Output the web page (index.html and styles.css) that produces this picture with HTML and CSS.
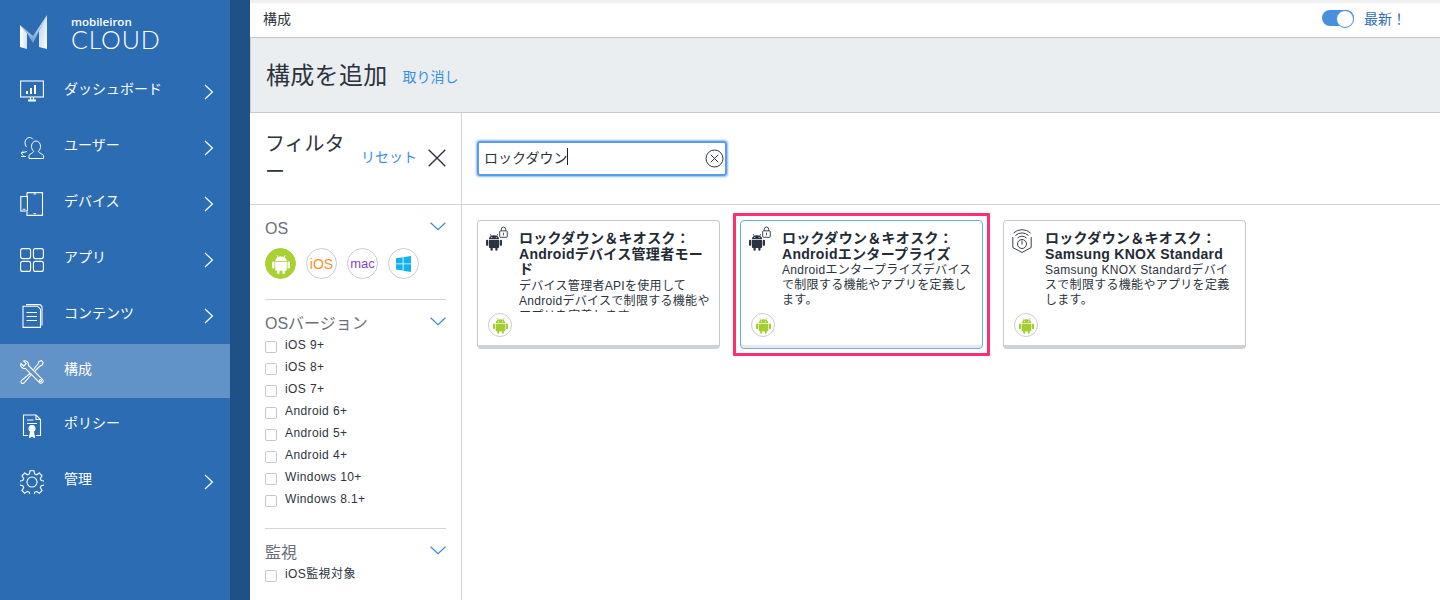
FILE: index.html
```html
<!DOCTYPE html>
<html lang="ja">
<head>
    <meta charset="UTF-8">
    <title>構成を追加</title>
    <link rel="stylesheet" href="styles.css">
</head>
<body>

    <svg class="icon-defs" width="0" height="0">
        <defs>
            <symbol id="android" viewBox="0 0 20 22">
                <path d="M5.2 1 6.6 3.4M14.8 1 13.4 3.4" stroke="currentColor" stroke-width=".9" fill="none"/>
                <path d="M3.6 7.6C3.7 4.6 6.5 2.6 10 2.6s6.3 2 6.4 5z" fill="currentColor"/>
                <path d="M3.6 8.5h12.8v8.7a1.3 1.3 0 0 1-1.3 1.3H4.9a1.3 1.3 0 0 1-1.3-1.3z" fill="currentColor"/>
                <rect x="0" y="8.3" width="2.8" height="7.6" rx="1.4" fill="currentColor"/>
                <rect x="17.2" y="8.3" width="2.8" height="7.6" rx="1.4" fill="currentColor"/>
                <rect x="5.6" y="17" width="2.8" height="5" rx="1.4" fill="currentColor"/>
                <rect x="11.6" y="17" width="2.8" height="5" rx="1.4" fill="currentColor"/>
                <circle cx="7.2" cy="5.3" r=".7" fill="#fff"/>
                <circle cx="12.8" cy="5.3" r=".7" fill="#fff"/>
            </symbol>
            <symbol id="chevron-right" viewBox="0 0 10 16">
                <path d="M1 1l7.4 7L1 15" fill="none" stroke="currentColor" stroke-width="1.2"/>
            </symbol>
            <symbol id="chevron-down" viewBox="0 0 16 9">
                <path d="M.6.8 8 7.6 15.4.8" fill="none" stroke="currentColor" stroke-width="1.2"/>
            </symbol>
            <symbol id="lock" viewBox="0 0 10 13">
                <path d="M2.6 5.4V3.4a2.4 2.4 0 0 1 4.8 0v2" fill="none" stroke="currentColor" stroke-width="1.1"/>
                <rect x=".8" y="5.2" width="8.4" height="7.2" rx=".8" fill="#fff" stroke="currentColor" stroke-width="1.1"/>
                <rect x="4.5" y="7.2" width="1" height="3" fill="currentColor"/>
            </symbol>
        </defs>
    </svg>

    <aside class="sidebar">
        <div class="logo">
            <svg class="logo-mark" width="27" height="34" viewBox="0 0 27 34">
                <defs>
                    <linearGradient id="mark-left" x1="0" y1="0" x2="1" y2="0">
                        <stop offset="0" stop-color="#ffffff"/>
                        <stop offset="1" stop-color="#d4e3f2"/>
                    </linearGradient>
                    <linearGradient id="mark-mid" x1="0" y1="0" x2="0" y2="1">
                        <stop offset="0" stop-color="#f4f8fc"/>
                        <stop offset="1" stop-color="#6f9ccd"/>
                    </linearGradient>
                    <linearGradient id="mark-right" x1="0" y1="0" x2="1" y2="1">
                        <stop offset="0" stop-color="#b7cfe8"/>
                        <stop offset="1" stop-color="#ffffff"/>
                    </linearGradient>
                </defs>
                <path d="M0 10 7 18V34L0 32z" fill="url(#mark-left)"/>
                <path d="M0 10 13 21 27 0 19 16 13 28 7 18z" fill="url(#mark-mid)"/>
                <path d="M27 0V34L19 32V16z" fill="url(#mark-right)"/>
            </svg>
            <div class="logo-text">
                <div class="logo-brand">mobileiron</div>
                <div class="logo-product">CLOUD</div>
            </div>
        </div>

        <nav class="nav">
            <a class="nav-item">
                <svg class="nav-icon" viewBox="0 0 24 24" fill="none" stroke="#fff" stroke-width="1.1">
                    <rect x=".6" y="1" width="22.8" height="16"/>
                    <path d="M7 14V11M11 14V8M15 14V5" stroke-width="2"/>
                    <path d="M8 20.5h8" stroke-width="2"/>
                    <path d="M10.5 17v3M13.5 17v3"/>
                </svg>
                <span class="nav-label">ダッシュボード</span>
                <svg class="nav-arrow"><use href="#chevron-right"/></svg>
            </a>
            <a class="nav-item">
                <svg class="nav-icon" viewBox="0 0 24 24" fill="none" stroke="#fff" stroke-width="1">
                    <path d="M9 22.500h14.500v-2.800c0-1.700-4.600-2.300-5.200-4.400 1.500-1.300 2.200-3 2.200-5 0-3-2-5.300-4.500-5.300s-4.500 2.300-4.500 5.300c0 2 .7 3.700 2.200 5-.6 2.100-4.700 2.700-4.700 4.400z"/>
                    <path d="M13 3.300C12.100 2 10.800 1.500 9.500 1.500 7 1.500 5 3.800 5 6.800c0 1.600.5 3 1.400 4.200"/>
                    <path d="M6.800 15.500c-1.500.6-4 1-5.800 1.800l2.500-2.300M1 17.300l2.500 2.200M1 20.500h5"/>
                </svg>
                <span class="nav-label">ユーザー</span>
                <svg class="nav-arrow"><use href="#chevron-right"/></svg>
            </a>
            <a class="nav-item">
                <svg class="nav-icon" viewBox="0 0 24 24" fill="none" stroke="#fff" stroke-width="1.1">
                    <path d="M7 .6h15.500v22.800H7V20M7 5V.6"/>
                    <rect x=".8" y="4.500" width="6.600" height="14.500"/>
                    <path d="M13.500 2h2.500M13.500 21.700h2.500M2.800 17.300h2.500"/>
                </svg>
                <span class="nav-label">デバイス</span>
                <svg class="nav-arrow"><use href="#chevron-right"/></svg>
            </a>
            <a class="nav-item">
                <svg class="nav-icon" viewBox="0 0 24 24" fill="none" stroke="#fff" stroke-width="1.100">
                    <rect x=".6" y=".6" width="10" height="10" rx="2"/>
                    <rect x="13.400" y=".6" width="10" height="10" rx="2"/>
                    <rect x=".6" y="13.400" width="10" height="10" rx="2"/>
                    <rect x="13.400" y="13.400" width="10" height="10" rx="2"/>
                </svg>
                <span class="nav-label">アプリ</span>
                <svg class="nav-arrow"><use href="#chevron-right"/></svg>
            </a>
            <a class="nav-item">
                <svg class="nav-icon" viewBox="0 0 24 24" fill="none" stroke="#fff" stroke-width="1.100">
                    <path d="M3 2.200h14.500l3 3v18.200H3z"/>
                    <path d="M6 .6h14l2 2v19"/>
                    <path d="M6.500 8.500h10.500M6.500 12.500h10.500M6.500 16.500h10.500"/>
                </svg>
                <span class="nav-label">コンテンツ</span>
                <svg class="nav-arrow"><use href="#chevron-right"/></svg>
            </a>
            <a class="nav-item active">
                <svg class="nav-icon" viewBox="0 0 24 24" fill="none" stroke="#fff" stroke-width="1.100">
                    <path d="M1 3.500 3.700 6.200 6.200 3.700 3.500 1C6 0 9 2 8.500 5.500L22.500 19.500c1 1.200.8 2.200 0 3-.9.800-2 .9-3 0L5.500 8.500C2 9-.2 6 1 3.500z"/>
                    <circle cx="20.500" cy="20.500" r="1"/>
                    <path d="M10 13.500 2 20c-1.300 1.200-1.300 2.200-.5 3 .8.700 1.800.6 2.800-.4L11 15M13.500 9.500 18 4l1-2.500 2.500-.8 1.600 1.800-.8 2.500L20 6l-5 5"/>
                </svg>
                <span class="nav-label">構成</span>
            </a>
            <a class="nav-item">
                <svg class="nav-icon" viewBox="0 0 24 24" fill="none" stroke="#fff" stroke-width="1.100">
                    <path d="M8 21.500H3.500V1h12.500l4.500 4.500v16H16"/>
                    <path d="M16 1v4.500h4.500M7 6h6.500M7 9.500h10"/>
                    <circle cx="12" cy="14.500" r="3" fill="#fff"/>
                    <path d="M9.500 23.500l1-5.500h3l1 5.500-2.500-1.500z" fill="#fff"/>
                </svg>
                <span class="nav-label">ポリシー</span>
            </a>
            <a class="nav-item">
                <svg class="nav-icon" viewBox="0 0 24 24" fill="none" stroke="#fff" stroke-width="1.100">
                    <circle cx="12" cy="12" r="5"/>
                    <path d="M10 .7h4l.6 3.200 2 .9 2.700-1.800 2.800 2.800-1.800 2.700.9 2 3.200.6v4l-3.200.6-.9 2 1.800 2.700-2.800 2.800-2.700-1.800-2 .9-.6 3.200h-4l-.6-3.200-2-.9-2.700 1.800-2.800-2.800 1.800-2.700-.9-2-3.200-.6v-4l3.200-.6.9-2-1.800-2.700 2.800-2.800 2.700 1.800 2-.9z"/>
                </svg>
                <span class="nav-label">管理</span>
                <svg class="nav-arrow"><use href="#chevron-right"/></svg>
            </a>
        </nav>
    </aside>

    <main class="main">
        <header class="topbar">
            <span>構成</span>
            <div class="status">
                <span class="toggle"></span>
                <span class="status-text">最新！</span>
            </div>
        </header>

        <div class="page-head">
            <h1>構成を追加</h1>
            <a class="link">取り消し</a>
        </div>

        <div class="workspace">
            <section class="filters">
                <div class="filters-head">
                    <h2>フィルター</h2>
                    <a class="link">リセット</a>
                    <svg class="filters-close" width="18" height="18" viewBox="0 0 18 18">
                        <path d="M.7.7l16.600 16.600M17.300.7.7 17.300" stroke="#2c3440" stroke-width="1.400"/>
                    </svg>
                </div>

                <div class="filter-group filter-os">
                    <div class="filter-title">OS <svg class="filter-chevron"><use href="#chevron-down"/></svg></div>
                    <div class="os-icons">
                        <span class="os-icon android-on"><svg width="18" height="20"><use href="#android"/></svg></span>
                        <span class="os-icon ios">iOS</span>
                        <span class="os-icon mac">mac</span>
                        <span class="os-icon">
                            <svg width="15" height="16" viewBox="0 0 15 16"><path d="M0 2.300 6.700 1.300v6.200H0zM7.500 1.200 15 0v7.500H7.500zM0 8.300h6.700v6.300L0 13.600zM7.500 8.300H15V16l-7.500-1.200z" fill="#12b1f0"/></svg>
                        </span>
                    </div>
                </div>

                <div class="filter-group filter-version">
                    <div class="filter-title">OSバージョン <svg class="filter-chevron"><use href="#chevron-down"/></svg></div>
                    <label class="check"><span class="box"></span>iOS 9+</label>
                    <label class="check"><span class="box"></span>iOS 8+</label>
                    <label class="check"><span class="box"></span>iOS 7+</label>
                    <label class="check"><span class="box"></span>Android 6+</label>
                    <label class="check"><span class="box"></span>Android 5+</label>
                    <label class="check"><span class="box"></span>Android 4+</label>
                    <label class="check"><span class="box"></span>Windows 10+</label>
                    <label class="check"><span class="box"></span>Windows 8.1+</label>
                </div>

                <div class="filter-group filter-super">
                    <div class="filter-title">監視 <svg class="filter-chevron"><use href="#chevron-down"/></svg></div>
                    <label class="check"><span class="box"></span>iOS監視対象</label>
                </div>
            </section>

            <section class="results">
                <div class="search-bar">
                    <div class="search-box">
                        <span class="search-text">ロックダウン</span><span class="caret"></span>
                        <svg class="search-clear" width="19" height="19" viewBox="0 0 19 19" fill="none" stroke="#2c3440">
                            <circle cx="9.500" cy="9.500" r="8.500"/>
                            <path d="M5.800 5.800l7.400 7.400M13.200 5.800l-7.400 7.400"/>
                        </svg>
                    </div>
                </div>

                <div class="cards">
                    <article class="card">
                        <div class="card-top">
                            <div class="card-icon">
                                <svg class="card-android"><use href="#android"/></svg>
                                <svg class="card-lock"><use href="#lock"/></svg>
                            </div>
                            <div class="card-text">
                                <h3>ロックダウン＆キオスク：Androidデバイス管理者モード</h3>
                                <p>デバイス管理者APIを使用してAndroidデバイスで制限する機能やアプリを定義します。</p>
                            </div>
                        </div>
                        <span class="platform"><svg width="15" height="17"><use href="#android"/></svg></span>
                    </article>

                    <article class="card selected">
                        <div class="card-top">
                            <div class="card-icon">
                                <svg class="card-android"><use href="#android"/></svg>
                                <svg class="card-lock"><use href="#lock"/></svg>
                            </div>
                            <div class="card-text">
                                <h3>ロックダウン＆キオスク：Androidエンタープライズ</h3>
                                <p>Androidエンタープライズデバイスで制限する機能やアプリを定義します。</p>
                            </div>
                        </div>
                        <span class="platform"><svg width="15" height="17"><use href="#android"/></svg></span>
                    </article>

                    <article class="card">
                        <div class="card-top">
                            <div class="card-icon">
                                <svg class="card-knox" width="20" height="26" viewBox="0 0 20 26" fill="none" stroke="#3a424d" stroke-width="1">
                                    <path d="M3.500 8.500a9.500 9.500 0 0 1 13 0M1.500 6a12.500 12.500 0 0 1 17 0M5.500 11a6.500 6.500 0 0 1 9 0"/>
                                    <path d="M.8 10v10.500l9.200 5 9.200-5V10"/>
                                    <circle cx="10" cy="17" r="4.500"/>
                                    <path d="M10 13.500v4"/>
                                </svg>
                            </div>
                            <div class="card-text">
                                <h3>ロックダウン＆キオスク：Samsung KNOX Standard</h3>
                                <p>Samsung KNOX Standardデバイスで制限する機能やアプリを定義します。</p>
                            </div>
                        </div>
                        <span class="platform"><svg width="15" height="17"><use href="#android"/></svg></span>
                    </article>
                </div>
            </section>
        </div>
    </main>

</body>
</html>
```

FILE: styles.css
```css
* {
    box-sizing: border-box;
}

body {
    margin: 0;
    height: 600px;
    overflow: hidden;
    display: flex;
    font-family: "Liberation Sans", "Noto Sans CJK JP", sans-serif;
    color: #2c3440;
    background-color: #fff;
}

.icon-defs {
    display: none;
}

/* sidebar */
.sidebar {
    width: 250px;
    flex: none;
    height: 600px;
    background-color: #2b6cb3;
    border-right: 20px solid #1f5187;
    color: #fff;
}

.logo {
    height: 64px;
    display: flex;
    padding: 15px 0 0 20px;
}

.logo-mark {
    flex: none;
}

.logo-text {
    margin-left: 24px;
}

.logo-brand {
    font-family: "Open Sans", sans-serif;
    font-size: 11.500px;
    font-weight: 600;
    line-height: 13px;
}

.logo-product {
    font-family: "Lato", sans-serif;
    font-size: 25px;
    font-weight: 300;
    line-height: 22px;
    letter-spacing: .8px;
}

.nav-item {
    height: 54px;
    margin-bottom: 2px;
    display: flex;
    align-items: center;
    padding-left: 20px;
}

.nav-item.active {
    background-color: #6192c8;
    margin-bottom: 0;
}

.nav-icon {
    width: 24px;
    height: 24px;
    flex: none;
    margin-top: 2px;
}

.nav-label {
    font-size: 14px;
    margin-left: 20px;
    margin-top: -4px;
    line-height: 20px;
}

.nav-arrow {
    width: 10px;
    height: 16px;
    margin-left: auto;
    margin-right: 16px;
    margin-top: 1px;
}

/* main column */
.main {
    flex: 1;
    min-width: 0;
    display: flex;
    flex-direction: column;
    padding-top: 3px;
    background-color: #f0f0f0;
}

.topbar {
    height: 35px;
    flex: none;
    display: flex;
    align-items: center;
    justify-content: space-between;
    padding: 0 34px 4px 13px;
    font-size: 14px;
    background-color: #fff;
    border-bottom: 1px solid #c8c8c8;
}

.status {
    display: flex;
    align-items: center;
}

.toggle {
    width: 32px;
    height: 16px;
    border-radius: 8px;
    background-color: #4a8fdb;
    position: relative;
}

.toggle::after {
    content: "";
    position: absolute;
    right: 0;
    top: 0;
    width: 16px;
    height: 16px;
    border-radius: 50%;
    background-color: #fff;
    border: 1px solid #4a8fdb;
}

.status-text {
    margin-left: 10px;
    color: #2f6fb5;
    font-size: 14px;
}

.page-head {
    height: 75px;
    flex: none;
    display: flex;
    align-items: center;
    padding: 0 0 1px 15px;
    background-color: #ebeef1;
    border-bottom: 1px solid #c8c8c8;
    border-left: 1px solid #c8ccd0;
}

.page-head h1 {
    margin: 0 15px 2px 0;
    font-size: 24px;
    font-weight: 400;
    letter-spacing: .3px;
}

.page-head .link {
    margin-top: 2px;
}

.link {
    color: #3a8ee0;
    font-size: 14px;
}

.workspace {
    flex: 1;
    min-height: 0;
    display: flex;
    background-color: #fff;
}

/* filter column */
.filters {
    width: 212px;
    flex: none;
    padding: 0 15px;
    border-right: 1px solid #d2d5da;
}

.filters-head {
    height: 92px;
    margin: 0 -15px;
    padding: 17px 15px 0 15px;
    display: flex;
    border-bottom: 1px solid #d2d5da;
}

.filters-head h2 {
    width: 91px;
    margin: 0 5px 0 0;
    font-size: 20px;
    line-height: 28px;
    font-weight: 400;
}

.filters-head .link {
    margin-top: 17px;
    line-height: 20px;
    white-space: nowrap;
}

.filters-close {
    flex: none;
    margin: 19px 0 0 11px;
}

.filter-group {
    border-bottom: 1px solid #d2d5da;
}

.filter-os {
    height: 95px;
    padding-top: 14px;
}

.filter-version {
    height: 229px;
    padding-top: 14px;
}

.filter-super {
    padding-top: 14px;
    border-bottom: none;
}

.filter-title {
    display: flex;
    justify-content: space-between;
    align-items: flex-start;
    font-size: 16px;
    line-height: 20px;
    color: #6a7079;
}

.filter-chevron {
    width: 16px;
    height: 9px;
    margin-top: 3px;
    color: #3a87d8;
}

.os-icons {
    display: flex;
    gap: 10px;
    margin-top: 9px;
}

.os-icon {
    width: 31px;
    height: 31px;
    border-radius: 50%;
    border: 1px solid #c8ccd0;
    display: flex;
    align-items: center;
    justify-content: center;
    font-size: 13px;
}

.android-on {
    background-color: #a9d134;
    border-color: #a9d134;
    color: #fff;
}

.ios {
    color: #f6932b;
    font-size: 14px;
}

.mac {
    color: #8a3fc7;
}

.check {
    display: flex;
    height: 22px;
    font-size: 12px;
    line-height: 16px;
    letter-spacing: .4px;
    color: #2c3440;
}

.filter-title + .check {
    margin-top: 3px;
}

.box {
    width: 12px;
    height: 12px;
    flex: none;
    margin: 4px 8px 0 0;
    border: 1px solid #c4c7cb;
    border-radius: 2px;
}

/* results */
.results {
    flex: 1;
    min-width: 0;
}

.search-bar {
    height: 92px;
    padding: 28px 0 0 15px;
    border-bottom: 1px solid #d2d5da;
}

.search-box {
    width: 250px;
    height: 35px;
    display: flex;
    align-items: center;
    padding: 0 1px 4px 5px;
    border: 2px solid #5b9bea;
    border-radius: 3px;
    box-shadow: 0 0 2px 1px #8fbaf0;
    font-size: 14px;
}

.caret {
    width: 1px;
    height: 17px;
    background-color: #222;
}

.search-clear {
    margin: 4px 0 0 auto;
}

.cards {
    display: flex;
    gap: 20px;
    padding: 15px 0 0 15px;
}

.card {
    width: 243px;
    height: 129px;
    position: relative;
    padding: 10px 6px 0 8px;
    border: 1px solid #c6cacf;
    border-bottom: 4px solid #ccd2d6;
    border-radius: 4px;
    background-color: #fff;
}

.card.selected {
    border: 1px solid #66aef0;
    box-shadow: inset 0 -3px 0 #e6eaee;
}

/* pink highlight drawn over the screenshot */
.card.selected::after {
    content: "";
    position: absolute;
    left: -8px;
    right: -8px;
    top: -8px;
    bottom: -8px;
    border: 3px solid #ff2e6e;
    border-radius: 1px;
}

.card-top {
    display: flex;
}

.card-icon {
    width: 33px;
    flex: none;
    position: relative;
    height: 30px;
}

.card-android {
    position: absolute;
    left: 0;
    top: 2px;
    width: 16px;
    height: 18px;
    color: #2a3344;
}

.card-lock {
    position: absolute;
    left: 13px;
    top: -5px;
    width: 9px;
    height: 12px;
    color: #3a424d;
}

.card-knox {
    position: absolute;
    left: 0;
    top: -4px;
}

.card-text {
    flex: 1;
    min-width: 0;
    height: 81px;
    overflow: hidden;
    letter-spacing: .3px;
}

.card-text h3 {
    margin: 0;
    font-size: 14px;
    line-height: 15.500px;
    font-weight: 700;
    color: #232a35;
}

.card-text p {
    margin: 1px 0 0;
    font-size: 12px;
    line-height: 15px;
    color: #2c3440;
}

.platform {
    position: absolute;
    left: 10px;
    top: 92px;
    width: 24px;
    height: 24px;
    border-radius: 50%;
    border: 1px solid #c8ccd0;
    display: flex;
    align-items: center;
    justify-content: center;
    color: #a4cd2f;
}
```
